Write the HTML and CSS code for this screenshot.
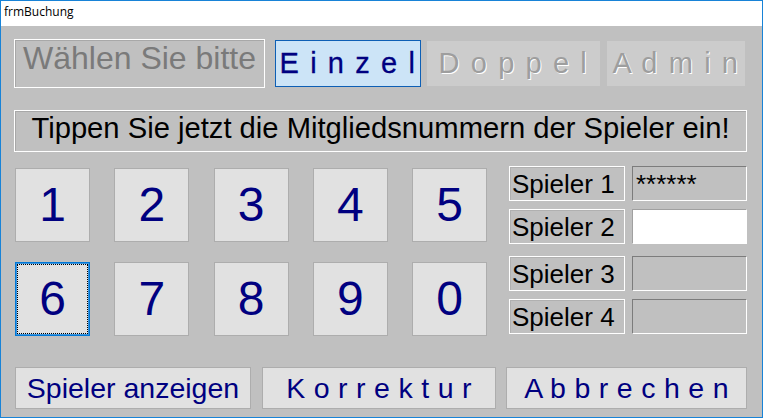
FILE: index.html
```html
<!DOCTYPE html>
<html lang="de">
<head>
<meta charset="utf-8">
<title>frmBuchung</title>
<link rel="stylesheet" href="styles.css">
</head>
<body>
<div class="window">
  <div class="titlebar">frmBuchung</div>
  <div class="client">
    <div class="toprow">
      <div class="caption">Wählen Sie bitte</div>
      <button class="mode einzel">E i n z e l</button>
      <button class="mode off doppel">D o p p e l</button>
      <button class="mode off admin">A d m i n</button>
    </div>
    <div class="prompt">Tippen Sie jetzt die Mitgliedsnummern der Spieler ein!</div>
    <div class="main">
      <div class="keypad">
        <button class="key">1</button>
        <button class="key">2</button>
        <button class="key">3</button>
        <button class="key">4</button>
        <button class="key">5</button>
        <button class="key focused">6</button>
        <button class="key">7</button>
        <button class="key">8</button>
        <button class="key">9</button>
        <button class="key">0</button>
      </div>
      <div class="players">
        <div class="prow">
          <div class="plabel">Spieler 1</div>
          <div class="pfield">******</div>
        </div>
        <div class="prow">
          <div class="plabel">Spieler 2</div>
          <div class="pfield current"></div>
        </div>
        <div class="prow pair-start">
          <div class="plabel">Spieler 3</div>
          <div class="pfield"></div>
        </div>
        <div class="prow">
          <div class="plabel">Spieler 4</div>
          <div class="pfield"></div>
        </div>
      </div>
    </div>
    <div class="actions">
      <button class="act show">Spieler anzeigen</button>
      <button class="act fix">K o r r e k t u r</button>
      <button class="act cancel">A b b r e c h e n</button>
    </div>
  </div>
</div>
</body>
</html>
```

FILE: styles.css
```css
* {
  box-sizing: border-box;
}

body {
  margin: 0;
  background: #ffffff;
}

.window {
  width: 763px;
  height: 418px;
  border: 1px solid #1883d7;
  display: flex;
  flex-direction: column;
  font-family: "Liberation Sans", Arial, sans-serif;
  overflow: hidden;
}

.titlebar {
  height: 25px;
  flex: none;
  background: #ffffff;
  color: #000000;
  font-family: "Open Sans", "Noto Sans", sans-serif;
  font-size: 12px;
  line-height: 16px;
  padding: 3px 0 0 3px;
}

.client {
  flex: 1;
  background: #c0c0c0;
  padding: 13px 15px 0 13px;
  display: flex;
  flex-direction: column;
}

button {
  font-family: "Liberation Sans", Arial, sans-serif;
  margin: 0;
  padding: 0;
  cursor: default;
}

/* top row */
.toprow {
  display: flex;
  align-items: center;
  height: 49px;
  flex: none;
}

.caption {
  width: 251px;
  height: 49px;
  border: 1px solid #ffffff;
  box-shadow: inset 1px 1px 0 #a8a8a8;
  color: #7a7a7a;
  font-size: 32px;
  line-height: 36px;
  text-align: center;
  white-space: nowrap;
}

.mode {
  font-size: 29px;
  letter-spacing: 1.6px;
  white-space: nowrap;
}

.einzel {
  width: 146px;
  height: 47px;
  margin-left: 10px;
  background: #cce4f7;
  border: 1px solid #0d5fb5;
  color: #000080;
  -webkit-text-stroke: 0.3px #000080;
}

.off {
  height: 45px;
  background: #cccccc;
  border: 1px solid #cccccc;
  color: #9e9e9e;
  text-shadow: 1px 1px 0 #ffffff;
}

.doppel {
  width: 173px;
  margin-left: 6px;
}

.admin {
  width: 138px;
  margin-left: 7px;
}

/* prompt */
.prompt {
  margin-top: 22px;
  height: 42px;
  flex: none;
  border: 1px solid #ffffff;
  box-shadow: inset 1px 1px 0 #a8a8a8;
  color: #000000;
  font-size: 29.2px;
  text-align: center;
  white-space: nowrap;
  padding-top: 1px;
}

/* main area */
.main {
  margin-top: 14px;
  display: flex;
  align-items: flex-start;
  flex: none;
}

.keypad {
  margin: 2px 0 0 1px;
  display: grid;
  grid-template-columns: repeat(5, 75px);
  grid-auto-rows: 74px;
  column-gap: 24.25px;
  row-gap: 20px;
}

.key {
  background: #e1e1e1;
  border: 1px solid #adadad;
  color: #000080;
  font-size: 48px;
  line-height: 1;
}

.key.focused {
  border-color: #0078d7;
  box-shadow: inset 0 0 0 1px #3c94dd;
  outline: 1px dotted #000000;
  outline-offset: -3px;
}

.players {
  margin-left: auto;
  display: flex;
  flex-direction: column;
  gap: 8px;
}

.prow {
  display: flex;
  gap: 7px;
}

.prow.pair-start {
  margin-top: 4px;
}

.plabel {
  width: 116px;
  height: 35px;
  border: 1px solid #ffffff;
  box-shadow: inset 1px 1px 0 #b0b0b0;
  color: #000000;
  font-size: 26px;
  padding: 2px 0 0 2px;
  white-space: nowrap;
}

.pfield {
  width: 115px;
  height: 35px;
  background: #c0c0c0;
  border-top: 1px solid #7c7c7c;
  border-left: 1px solid #7c7c7c;
  border-bottom: 1px solid #ffffff;
  border-right: 1px solid #ffffff;
  color: #000000;
  font-size: 26px;
  padding: 2px 0 0 3px;
  white-space: nowrap;
}

.pfield.current {
  background: #ffffff;
  border-top-color: #a0a0a0;
  border-left-color: #a0a0a0;
}

/* bottom actions */
.actions {
  margin-top: 31px;
  display: flex;
  flex: none;
}

.act {
  height: 42px;
  background: #e1e1e1;
  border: 1px solid #adadad;
  color: #000080;
  font-size: 28.5px;
  white-space: nowrap;
}

.show {
  width: 236px;
  margin-left: 1px;
}

.fix {
  width: 234px;
  margin-left: 11px;
  letter-spacing: 0.3px;
}

.cancel {
  width: 241px;
  margin-left: 10px;
  letter-spacing: 0.3px;
}
```
